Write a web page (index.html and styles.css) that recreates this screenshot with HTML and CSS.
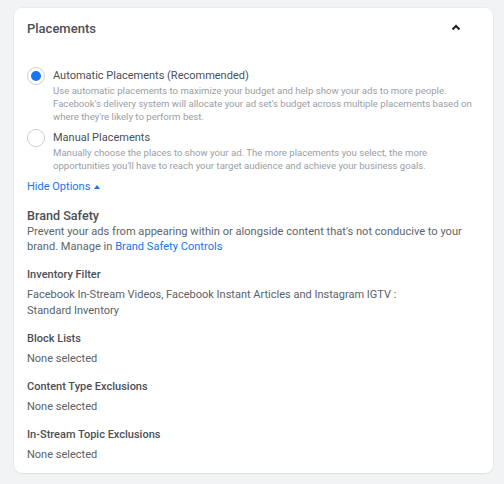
FILE: index.html
```html
<!DOCTYPE html>
<html>
<head>
<meta charset="utf-8">
<link rel="stylesheet" href="styles.css">
</head>
<body>
<div class="card">
  <div class="header">
    <div class="title">Placements</div>
    <svg class="chev" width="10" height="7" viewBox="0 0 10 7"><path d="M1.5 5.5 L5 2 L8.5 5.5" fill="none" stroke="#1c1e21" stroke-width="2"/></svg>
  </div>
  <div class="options">
    <div class="opt">
      <span class="radio on"><span class="dot"></span></span>
      <div class="opt-body">
        <div class="opt-label">Automatic Placements (Recommended)</div>
        <div class="opt-desc">Use automatic placements to maximize your budget and help show your ads to more people. Facebook's delivery system will allocate your ad set's budget across multiple placements based on where they're likely to perform best.</div>
      </div>
    </div>
    <div class="opt">
      <span class="radio"></span>
      <div class="opt-body">
        <div class="opt-label">Manual Placements</div>
        <div class="opt-desc">Manually choose the places to show your ad. The more placements you select, the more opportunities you'll have to reach your target audience and achieve your business goals.</div>
      </div>
    </div>
    <div class="hide">Hide Options <span class="caret"></span></div>
  </div>
  <div class="brand">
    <div class="brand-title">Brand Safety</div>
    <div class="brand-desc">Prevent your ads from appearing within or alongside content that's not conducive to your brand. Manage in <span class="link">Brand Safety Controls</span></div>
  </div>
  <div class="field">
    <div class="f-label">Inventory Filter</div>
    <div class="f-value">Facebook In-Stream Videos, Facebook Instant Articles and Instagram IGTV :<br>Standard Inventory</div>
  </div>
  <div class="field">
    <div class="f-label">Block Lists</div>
    <div class="f-value">None selected</div>
  </div>
  <div class="field">
    <div class="f-label">Content Type Exclusions</div>
    <div class="f-value">None selected</div>
  </div>
  <div class="field">
    <div class="f-label">In-Stream Topic Exclusions</div>
    <div class="f-value">None selected</div>
  </div>
</div>
</body>
</html>
```
FILE: styles.css
```css
* { box-sizing: border-box; }
html, body { margin: 0; padding: 0; }
body {
  background: #f2f3f4;
  font-family: Roboto, "Liberation Sans", Arial, sans-serif;
  color: #444950;
  width: 504px;
  height: 484px;
  padding: 8px 11px 0 14px;
}
.card {
  background: #fff;
  border-radius: 8px;
  box-shadow: 0 0 0 1px rgba(0,0,0,0.03), 0 1px 2px rgba(0,0,0,0.06);
  padding: 10px 12px 12px 13px;
  height: 465px;
}
.header {
  display: flex;
  align-items: center;
  justify-content: space-between;
  height: 20px;
  padding-right: 20px;
}
.title {
  font-size: 13px;
  font-weight: 500;
  color: #4b4f56;
}
.chev { display: block; margin-top: -1px; }
.options { margin-top: 30px; }
.opt { display: flex; gap: 8px; }
.opt + .opt { margin-top: 7px; }
.radio {
  flex: none;
  width: 18px;
  height: 18px;
  border-radius: 50%;
  border: 1px solid #ccd0d5;
  display: flex;
  align-items: center;
  justify-content: center;
  margin-top: -1px;
}
.radio .dot {
  width: 10px; height: 10px; border-radius: 50%; background: #1877f2;
}
.opt-label {
  font-size: 11px;
  line-height: 15px;
  color: #4b4f56;
}
.opt-desc {
  font-size: 9.6px;
  line-height: 13px;
  color: #9a9ea5;
  margin-top: 1px;
}
.hide {
  margin-top: 7px;
  font-size: 11px;
  line-height: 16px;
  color: #1a73e8;
  display: flex;
  align-items: center;
  gap: 4px;
}
.caret {
  width: 0; height: 0;
  border-left: 3.5px solid transparent;
  border-right: 3.5px solid transparent;
  border-bottom: 4px solid #1a73e8;
  margin-top: -1px;
}
.brand { margin-top: 13px; }
.brand-title {
  font-size: 12.6px;
  font-weight: 500;
  line-height: 16px;
  color: #4b4f56;
}
.brand-desc {
  font-size: 11.1px;
  line-height: 15px;
  color: #60646b;
}
.link { color: #1a73e8; }
.field { margin-top: 14px; }
.field + .field { margin-top: 13px; }
.f-label {
  font-size: 11px;
  font-weight: 500;
  line-height: 14px;
  color: #4b4f56;
}
.f-value {
  margin-top: 5px;
  font-size: 11px;
  line-height: 16px;
  color: #5b5f66;
}
```
